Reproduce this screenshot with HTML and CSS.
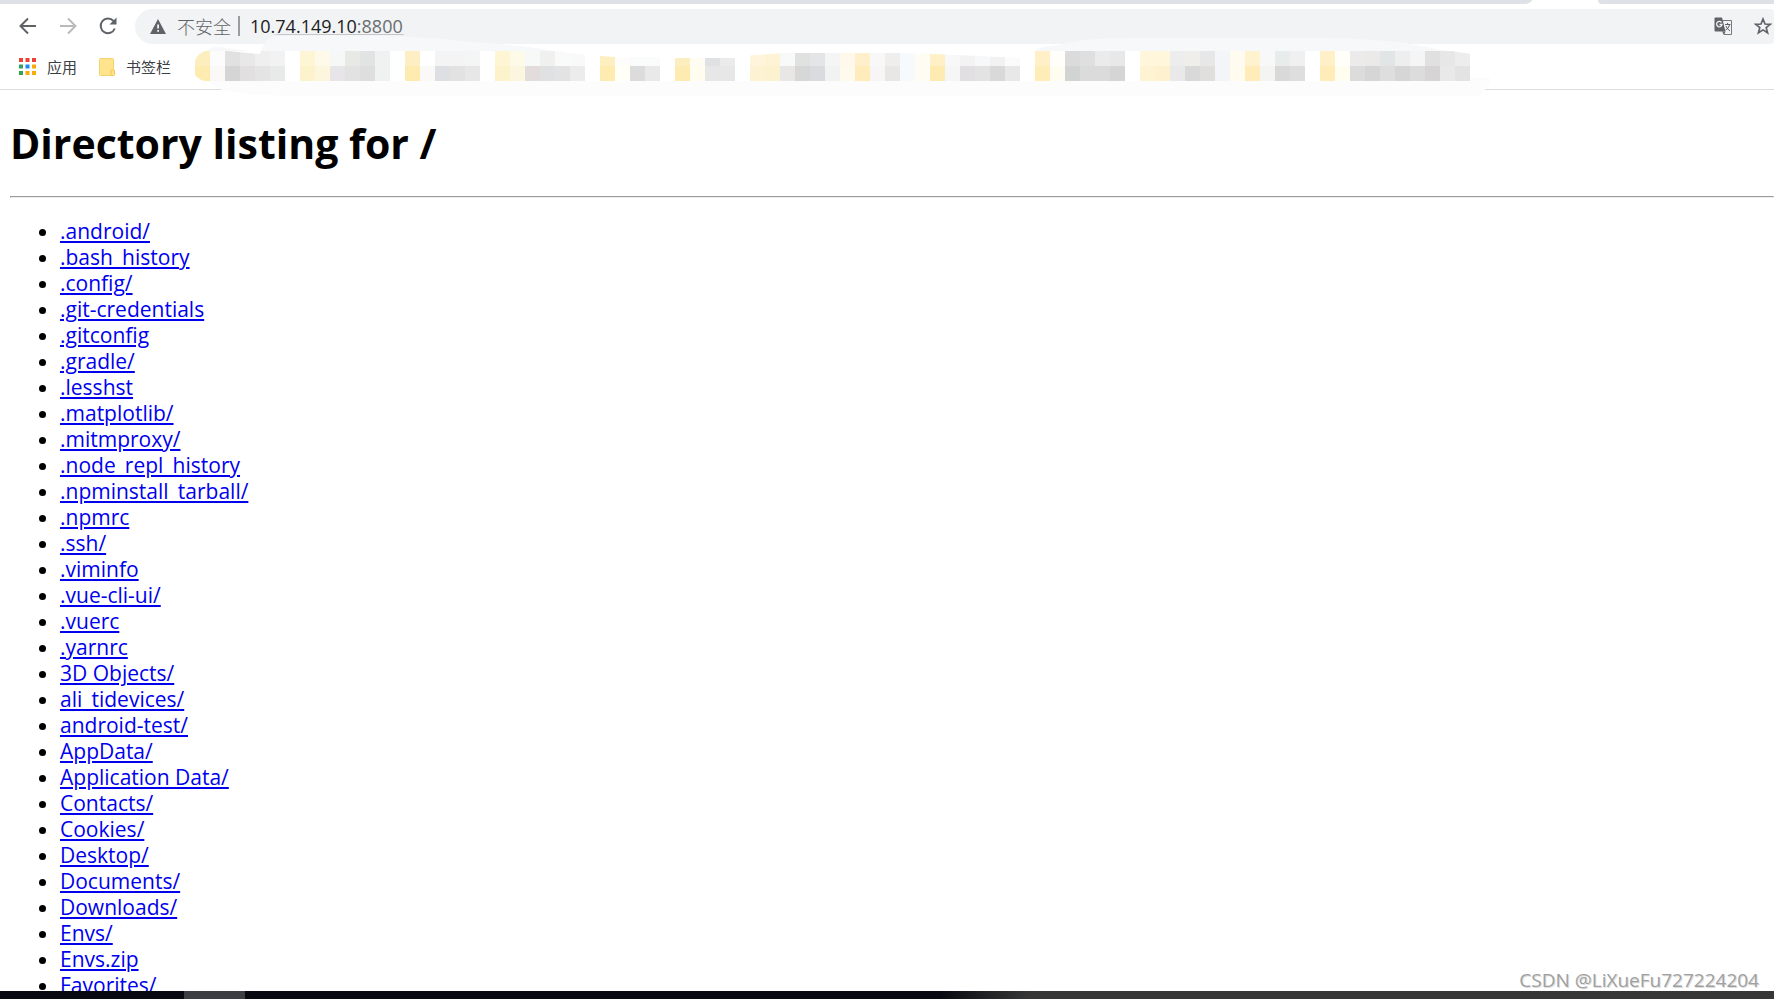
FILE: index.html
```
<!DOCTYPE html>
<html lang="zh-CN">
<head>
    <meta charset="UTF-8">
    <meta name="viewport" content="width=device-width, initial-scale=1.0">
    <title>Directory listing for /</title>
    <link rel="stylesheet" href="styles.css">
</head>
<body>
    <!-- 标签栏底边 -->
    <div class="tab-strip">
        <div class="tab-bg"></div>
        <div class="tab-gap"></div>
        <div class="tab-bg tab-bg-right"></div>
    </div>

    <!-- 工具栏 -->
    <div class="toolbar">
        <button class="icon-btn" type="button" aria-label="后退">
            <svg width="18" height="18" viewBox="0 0 18 18" fill="none" stroke="#5f6368" stroke-width="2"><path d="M17 9H2M9 1.500L1.500 9L9 16.500"/></svg>
        </button>
        <button class="icon-btn" type="button" aria-label="前进">
            <svg width="18" height="18" viewBox="0 0 18 18" fill="none" stroke="#bababc" stroke-width="2"><path d="M1 9H16M9 1.500L16.500 9L9 16.500"/></svg>
        </button>
        <button class="icon-btn" type="button" aria-label="重新加载">
            <svg width="18" height="18" viewBox="0 0 18 18" fill="none" stroke="#5f6368" stroke-width="2"><path d="M15.800 11.500A7.300 7.300 0 1 1 14.500 4"/><path d="M17.500 0.500V7.500H10.500Z" fill="#5f6368" stroke="none"/></svg>
        </button>
        <div class="omnibox">
            <svg width="16" height="15" viewBox="0 0 16 15"><path d="M8 0L16 15H0Z" fill="#5f6368"/><path d="M7.200 5.500h1.800v4H7.200zM7.200 11h1.800v1.800H7.200z" fill="#f1f3f4"/></svg>
            <span class="insecure">不安全</span>
            <span class="divider"></span>
            <span class="url">10.74.149.10<span class="port">:8800</span></span>
            <button class="icon-btn translate" type="button" aria-label="翻译此页">
                <svg width="19" height="19" viewBox="0 0 19 19"><path d="M8 3.500H17.500V17.500H10L8.500 14.500" fill="none" stroke="#77797d"/><path d="M1.500 0.500H8L11.500 14.500H1.500Q0.500 14.500 0.500 13.500V1.500Q0.500 0.500 1.500 0.500Z" fill="#5f6368"/><path d="M7.500 5.500A2.700 2.700 0 1 0 8 7.500H5.500" fill="none" stroke="#f1f3f4" stroke-width="1.300"/><path d="M9 14.500H11.500L10 18Z" fill="#5f6368"/><path d="M11 7.500H16.500M13.500 6V7.500M15.500 8Q14.500 12 11.500 13M12 9Q13 12 16 14" fill="none" stroke="#5f6368"/></svg>
            </button>
            <button class="icon-btn star" type="button" aria-label="为此网页添加书签">
                <svg width="18" height="18" viewBox="0 0 18 18"><path d="M9 2L11 7L16.300 7.300L12.200 10.600L13.600 15.800L9 12.900L4.400 15.800L5.800 10.600L1.700 7.300L7 7Z" fill="none" stroke="#5f6368" stroke-width="1.700"/></svg>
            </button>
        </div>
    </div>

    <!-- 书签栏 -->
    <div class="bookmarks">
        <a class="bookmark" href="#">
            <svg width="17" height="17" viewBox="0 0 17 17">
                <path d="M0 0h4v4H0zM6.500 0h4v4h-4zM13 0h4v4h-4z" fill="#ea4335"/>
                <path d="M0 6.500h4v4H0zM0 13h4v4H0z" fill="#34a05a"/>
                <path d="M6.500 6.500h4v4h-4z" fill="#1a8cf0"/>
                <path d="M13 6.500h4v4h-4zM6.500 13h4v4h-4zM13 13h4v4h-4z" fill="#f9ab0a"/>
            </svg>
            <span>应用</span>
        </a>
        <a class="bookmark" href="#">
            <svg width="16" height="18" viewBox="0 0 16 18"><rect x="0.500" y="0.500" width="14" height="17" rx="1" fill="#ffe48d" stroke="#f3d46b"/><rect x="12" y="12" width="3.500" height="5.500" rx="1" fill="#ffe48d" stroke="#efc94c"/></svg>
            <span>书签栏</span>
        </a>
        <svg class="mosaic" width="1320" height="70" viewBox="180 30 1320 70" aria-hidden="true">
            <path d="M195 74L222 90Q250 96 290 96H1478Q1486 91 1490 81V78H195Z" fill="#fcfcfc"/>
            <path d="M195 62Q205 47 218 47Q232 48 261 53Q264 37 278 36Q400 33 470 42Q540 46 565 54L600 57V70H195Z" fill="#f7f8fa"/>
            <path d="M1035 51Q1040 46 1060 45Q1080 38 1130 38H1330Q1400 39 1440 50L1470 54V66H1035Z" fill="#f6f8fa"/>
            <g id="tiles"></g>
            <path d="M190 48H211Q198 53 195 60V75Q199 80 205 81H190Z" fill="#fff"/>
            <path d="M228 51H261L260 54Z" fill="#fff"/>
            <path d="M555 50Q570 54 600 56L615 57H660V58H740V56L785 53H895L935 54L1000 57L1030 58V50Z" fill="#fff"/>
            <path d="M1445 50L1471 54V50Z" fill="#fff"/>
            <path d="M273 34H404V35H278Z" fill="#c4c6c8"/>
        </svg>
    </div>

    <!-- 目录列表 -->
    <main class="listing">
        <h1>Directory listing for /</h1>
        <hr>
        <ul>
            <li><a href="#">.android/</a></li>
            <li><a href="#">.bash_history</a></li>
            <li><a href="#">.config/</a></li>
            <li><a href="#">.git-credentials</a></li>
            <li><a href="#">.gitconfig</a></li>
            <li><a href="#">.gradle/</a></li>
            <li><a href="#">.lesshst</a></li>
            <li><a href="#">.matplotlib/</a></li>
            <li><a href="#">.mitmproxy/</a></li>
            <li><a href="#">.node_repl_history</a></li>
            <li><a href="#">.npminstall_tarball/</a></li>
            <li><a href="#">.npmrc</a></li>
            <li><a href="#">.ssh/</a></li>
            <li><a href="#">.viminfo</a></li>
            <li><a href="#">.vue-cli-ui/</a></li>
            <li><a href="#">.vuerc</a></li>
            <li><a href="#">.yarnrc</a></li>
            <li><a href="#">3D Objects/</a></li>
            <li><a href="#">ali_tidevices/</a></li>
            <li><a href="#">android-test/</a></li>
            <li><a href="#">AppData/</a></li>
            <li><a href="#">Application Data/</a></li>
            <li><a href="#">Contacts/</a></li>
            <li><a href="#">Cookies/</a></li>
            <li><a href="#">Desktop/</a></li>
            <li><a href="#">Documents/</a></li>
            <li><a href="#">Downloads/</a></li>
            <li><a href="#">Envs/</a></li>
            <li><a href="#">Envs.zip</a></li>
            <li><a href="#">Favorites/</a></li>
        </ul>
    </main>

    <!-- 任务栏 -->
    <div class="taskbar"><div class="task-active"></div></div>
    <div class="watermark">CSDN @LiXueFu727224204</div>

    <script src="tiles.js"></script>
</body>
</html>
```
FILE: styles.css
```
* {
    box-sizing: border-box;
}

body {
    margin: 0;
    height: 100vh;
    display: flex;
    flex-direction: column;
    overflow: hidden;
    position: relative;
    background-color: #fff;
    font-family: "Open Sans", "Noto Sans CJK SC", sans-serif;
    font-size: 21px;
    color: #000;
}

/* 标签栏 */
.tab-strip {
    display: flex;
    flex: none;
    height: 4px;
}

.tab-bg {
    flex: 1;
    background-color: #dee1e6;
    border-bottom-right-radius: 8px 4px;
}

.tab-gap {
    width: 66px;
}

.tab-bg-right {
    flex: 0 0 176px;
    border-radius: 0 0 0 8px;
}

/* 工具栏 */
.toolbar {
    display: flex;
    flex: none;
    align-items: center;
    gap: 22px;
    height: 44px;
    padding-left: 19px;
}

.icon-btn {
    display: flex;
    flex: none;
    padding: 0;
    border: none;
    background: none;
    cursor: pointer;
}

.omnibox {
    display: flex;
    flex: 1;
    align-items: center;
    height: 35px;
    margin-left: -4px;
    padding: 0 2px 0 15px;
    border-radius: 18px 4px 4px 18px;
    background-color: #f1f3f4;
    font-size: 18px;
    color: #5f6368;
}

.insecure {
    margin-left: 11px;
    font-family: "Noto Sans CJK SC", sans-serif;
    font-weight: 300;
}

.divider {
    width: 2px;
    height: 20px;
    margin: 0 10px 0 7px;
    background-color: #9a9c9f;
}

.url {
    color: #202124;
}

.port {
    color: #6b6e72;
}

.translate {
    margin-left: auto;
}

.star {
    margin-left: 21px;
}

/* 书签栏 */
.bookmarks {
    display: flex;
    flex: none;
    align-items: center;
    gap: 22px;
    height: 42px;
    padding: 0 0 4px 19px;
    border-bottom: 1px solid #dadce0;
    position: relative;
}

.bookmark {
    display: flex;
    align-items: center;
    gap: 11px;
    font-family: "Noto Sans CJK SC", sans-serif;
    font-size: 15px;
    color: #3c4043;
    text-decoration: none;
}

.mosaic {
    position: absolute;
    left: 180px;
    top: -18px;
}

/* 目录列表 */
.listing {
    flex: 1;
    min-height: 0;
    overflow: hidden;
    padding-left: 10px;
}

h1 {
    margin: 26px 0;
    font-size: 41px;
    line-height: 54px;
}

hr {
    margin: 0;
}

ul {
    margin: 20px 0 0;
    padding-left: 50px;
}

li {
    line-height: 26px;
}

li a {
    color: #0000ee;
    text-decoration-thickness: 2px;
    text-underline-offset: 2px;
}

/* 任务栏 */
.taskbar {
    flex: none;
    height: 8px;
    padding-left: 184px;
    background: linear-gradient(to right, #060a10 0%, #060a10 53%, #373737 58%);
}

.task-active {
    width: 61px;
    height: 8px;
    background-color: #3c3f42;
}

.watermark {
    position: absolute;
    right: 15px;
    bottom: 6px;
    font-size: 19px;
    line-height: 26px;
    color: #a0a0a0;
    text-shadow: 1px 1px 0 #ddd;
}
```
FILE: tiles.js
```
// 书签马赛克：每列一个颜色，两行，块大小 15px
const topRow = 'fdeec0 fcfcfc e1e1e1 e9e8e9 efefef f2f2f2 ffffff fef5d4 fef9e8 f6f7f7 e8e8e5 e1e4e3 f0f2f2 ffffff fdeec4 ffffff f4f4f4 f4f4f4 f4f5f5 ffffff fef5d4 fefae8 f7f8f8 f0f0ee f8fbfa f9f9f9 ffffff fdefc0 fffdfb fafcfc fafcfb ffffff fdeec0 fffdf3 e0e1e2 ebebeb ffffff fff5dc fff3d5 f8f9f9 e1e1e0 e3e5e7 f5f5f5 fff9ec fff0cb f8f8f9 f0eeed f7fafd fffdf3 fff0c8 f8f8f8 f3f3f4 f7f8fa f2f2f2 fbfbfb ffffff fff0c8 fffefa dbdbdb dedfde ebebeb e8e8e8 ffffff fff6dc fff6dc ededed f0eeeb e7e7e7 f3f5f8 fffbf1 fff2ce f8f8f8 e8eceb f0f0f0 ffffff fff0c8 fffef8 ebebeb ebeae8 e2e5e5 eeeeee f5f5f5 e0e0e0 e7e7e7 ededed';
const bottomRow = 'fdebaf faf9f8 d5d5d5 e1dfe0 e4e4e4 e8eae9 ffffff fcf2cb fdf6df e7e5e7 e2e2e2 dedede f0f2f1 ffffff fdebaf faf9f7 dddfe2 e2e2e2 e7e7e7 ffffff fcf2cb fdf6df e2dcdd dfe1e3 e3e3e3 ececec ffffff fdebaf fffef7 dcdcdc e9e9ea ffffff fdebb2 fffcf0 e7e7e8 e7e7e7 ffffff fdf3d2 fdf2d0 e9e7e5 d7d7d7 d9dbdf f2f2f2 fffaee ffecba f7f5f6 e9e7e5 f7fafd fffdf3 fdebb2 f6f6f6 e1dfe1 e3e3e3 d9d9d9 e8e8e8 ffffff ffedb8 fffdf2 d1d4d3 dbdbdb dbdbdb d5d5d5 ffffff fef3d3 fdf1d0 e9e9ea d9d9d9 e1dfdd f3f5f8 fffbee ffecb8 f4f4f3 d9d9d9 dedede ffffff ffecb8 fffdf0 dcdcdc d6d6d6 dedede d6d6d6 dcdcdc d7d4d5 e9e9e9 e3e3e3';

const tiles = document.getElementById('tiles');

[topRow, bottomRow].forEach(function(row, y) {
    row.split(' ').forEach(function(color, x) {
        const rect = document.createElementNS('http://www.w3.org/2000/svg', 'rect');
        rect.setAttribute('x', 195 + x * 15);
        rect.setAttribute('y', 51 + y * 15);
        rect.setAttribute('width', 15);
        rect.setAttribute('height', 15);
        rect.setAttribute('fill', '#' + color);
        tiles.appendChild(rect);
    });
});
```
